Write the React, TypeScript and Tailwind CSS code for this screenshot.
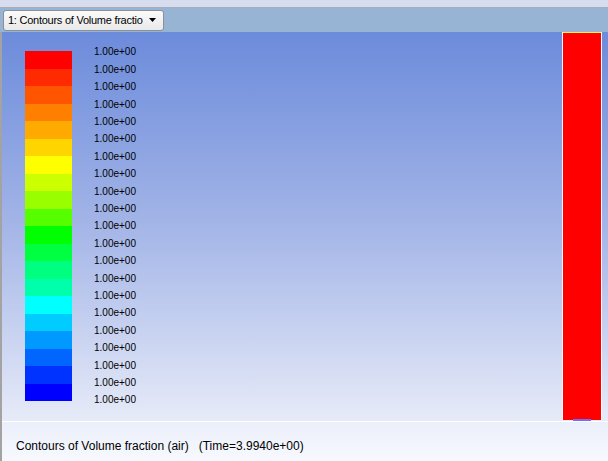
import React from "react";

const bands = [
  "#ff0000",
  "#ff2a00",
  "#ff5500",
  "#ff8000",
  "#ffaa00",
  "#ffd500",
  "#ffff00",
  "#ccff00",
  "#99ff00",
  "#55ff00",
  "#00ff00",
  "#00ff40",
  "#00ff80",
  "#00ffaa",
  "#00ffff",
  "#00ccff",
  "#0099ff",
  "#0066ff",
  "#0033ff",
  "#0000ff",
];

export default function App() {
  const labels = Array.from({ length: 21 }, () => "1.00e+00");
  return (
    <div
      className="w-[608px] h-[461px] flex flex-col overflow-hidden bg-white"
      style={{ fontFamily: '"Liberation Sans", Arial, sans-serif' }}
    >
      <div className="h-[7px] bg-[#d7ddef]" />
      <div className="h-[1px] bg-[#a7adbb]" />
      <div className="h-[24px] bg-[#98b4d4] flex items-start pt-[2px] pl-[3px]">
        <div className="w-[161px] h-[21px] rounded-[3px] border border-[#8c8f96] bg-gradient-to-b from-[#fbfbfb] to-[#e9e9ea] flex items-center pl-[4px] pr-[6px]">
          <span className="w-[139px] overflow-hidden whitespace-nowrap text-[11px] tracking-[-0.25px] text-black leading-none">
            1: Contours of Volume fractio
          </span>
          <svg width="8" height="5" viewBox="0 0 8 5" className="ml-auto">
            <path d="M0 0 H7 L3.5 4 Z" fill="#000" />
          </svg>
        </div>
      </div>
      <div className="flex-1 flex flex-col border-l-2 border-[#a3a3a3]">
        <div className="h-[389px] flex bg-gradient-to-b from-[#6c8bdb] via-[#a4b5e7] to-[#e7ebf8]">
          <div className="pl-[23px] pt-[19px] flex flex-col">
            {bands.map((c) => (
              <div key={c} className="w-[47px] h-[17.5px]" style={{ backgroundColor: c }} />
            ))}
          </div>
          <div className="ml-[22px] pt-[11.8px] flex flex-col">
            {labels.map((l, i) => (
              <div key={i} className="h-[17.4px] flex items-center text-[10px] leading-none text-black">
                {l}
              </div>
            ))}
          </div>
          <div className="ml-auto mr-[6px] w-[40px] mb-[1px] relative border-x border-white border-t border-t-[#ffff40] bg-[#ff0000]">
            <div className="absolute left-[10px] right-[10px] -bottom-[1px] h-[2px] bg-[#6d6dff]" />
          </div>
        </div>
        <div className="h-[1px] bg-white" />
        <div className="flex-1 bg-gradient-to-b from-[#ebeffa] to-[#f7f9fe] pl-[14px] pt-[17px]">
          <div className="text-[12px] leading-[14px] text-black whitespace-pre">
            {"Contours of Volume fraction (air)   (Time=3.9940e+00)"}
          </div>
        </div>
      </div>
    </div>
  );
}
